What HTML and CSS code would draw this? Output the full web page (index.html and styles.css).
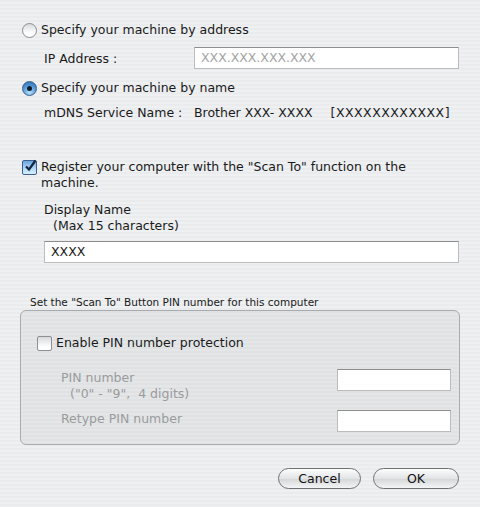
FILE: index.html
```html
<!DOCTYPE html>
<html lang="en">
<head>
  <meta charset="UTF-8" />
  <title>Scan To settings</title>
  <link rel="stylesheet" href="styles.css">
</head>
<body>
  <div class="dialog">
    <div class="option">
      <span class="radio"></span>
      <span>Specify your machine by address</span>
    </div>
    <div class="field ip-row">
      <span class="field-label">IP Address :</span>
      <div class="input placeholder">XXX.XXX.XXX.XXX</div>
    </div>

    <div class="option second">
      <span class="radio on"><span class="dot"></span></span>
      <span>Specify your machine by name</span>
    </div>
    <div class="field mdns-row">
      <span class="field-label">mDNS Service Name :</span>
      <span class="mdns-name">Brother XXX- XXXX</span>
      <span class="mdns-id">[XXXXXXXXXXXX]</span>
    </div>

    <div class="option check-row">
      <span class="check on">
        <svg width="14" height="14" viewBox="0 0 14 14"><path d="M3 7.5 L6 10.5 L12.5 1.5" fill="none" stroke="#15263f" stroke-width="2.2"/></svg>
      </span>
      <span>Register your computer with the "Scan To" function on the machine.</span>
    </div>
    <div class="display-name">
      <div>Display Name</div>
      <div class="hint">(Max 15 characters)</div>
    </div>
    <div class="input name-input">XXXX</div>

    <div class="caption">Set the "Scan To" Button PIN number for this computer</div>
    <div class="group">
      <div class="option">
        <span class="check"></span>
        <span>Enable PIN number protection</span>
      </div>
      <div class="pin-row first">
        <div class="pin-label">
          <div>PIN number</div>
          <div class="hint">("0" - "9", &nbsp;4 digits)</div>
        </div>
        <div class="input pin-input"></div>
      </div>
      <div class="pin-row">
        <div class="pin-label">Retype PIN number</div>
        <div class="input pin-input"></div>
      </div>
    </div>

    <div class="buttons">
      <button class="btn cancel">Cancel</button>
      <button class="btn ok">OK</button>
    </div>
  </div>
</body>
</html>
```

FILE: styles.css
```css
body { margin: 0; font-family: "DejaVu Sans", "Liberation Sans", sans-serif; font-size: 12.5px; color: #1a1a1a; background: repeating-linear-gradient(to bottom, #e9ebed 0, #e9ebed 2px, #eef0f2 2px, #eef0f2 4px); }
.dialog { width: 480px; height: 507px; box-sizing: border-box; padding: 22px 21px 0 22px; }

.option { display: flex; align-items: flex-start; gap: 4px; line-height: 16px; }
.second { margin-top: 11px; }
.check-row { margin-top: 38px; }

.radio { width: 13px; height: 13px; margin-top: 1px; border-radius: 50%; border: 1px solid #8a8c90; background: linear-gradient(#d8d9db, #ffffff 70%); position: relative; flex: none; }
.radio.on { border-color: #3d5f8c; background: radial-gradient(circle at 50% 80%, #b5e1fb, #4b8fd3 60%, #2d65a8); }
.radio .dot { position: absolute; left: 4px; top: 4px; width: 5px; height: 5px; border-radius: 50%; background: #111a28; }

.check { width: 13px; height: 13px; margin-top: 1px; border-radius: 2px; border: 1px solid #85878b; background: linear-gradient(#d8d9db, #ffffff 75%); position: relative; flex: none; }
.check.on { border-color: #3d5f8c; background: linear-gradient(#6aa6e2, #aed7f7 55%, #d6efff); }
.check svg { position: absolute; left: 0; top: -2px; }

.field { display: flex; align-items: center; padding-left: 22px; }
.field-label { width: 150px; flex: none; }
.ip-row { margin-top: 9px; }
.mdns-row { margin-top: 9px; line-height: 16px; }
.mdns-id { margin-left: 18px; letter-spacing: 0.5px; }

.input { box-sizing: border-box; height: 22px; background: #fff; border: 1px solid #bcbcbc; border-top-color: #8e8e8e; line-height: 20px; padding-left: 6px; }
.ip-row .input { flex: 1; }
.placeholder { color: #a4a4a4; }

.display-name { margin-top: 11px; padding-left: 22px; line-height: 16px; }
.hint { padding-left: 9px; }
.name-input { margin: 7px 0 0 22px; }

.caption { margin-top: 32px; padding-left: 8px; font-size: 10.5px; line-height: 14px; }
.group { margin: 1px -1px 0 -2px; padding: 24px 8px 12px 16px; border: 1px solid #a9abae; border-radius: 6px; background: repeating-linear-gradient(to bottom, #dfe1e3 0, #dfe1e3 2px, #e4e6e8 2px, #e4e6e8 4px); }
.group .check { border-color: #8d8f93; }

.pin-row { display: flex; justify-content: space-between; align-items: flex-start; color: #9a9b9d; line-height: 16px; padding-left: 24px; margin-top: 8px; }
.pin-row.first { margin-top: 18px; }
.pin-label { padding-top: 1px; }
.pin-input { width: 114px; }

.buttons { display: flex; justify-content: flex-end; gap: 12px; margin-top: 23px; }
.btn { height: 21px; border-radius: 11px; border: 1px solid #6e7074; background: linear-gradient(#fdfdfd, #e2e3e5 50%, #d4d5d7 51%, #f4f5f6); font-family: inherit; font-size: 12.5px; color: #111; padding: 0; }
.cancel { width: 83px; }
.ok { width: 86px; }
```
